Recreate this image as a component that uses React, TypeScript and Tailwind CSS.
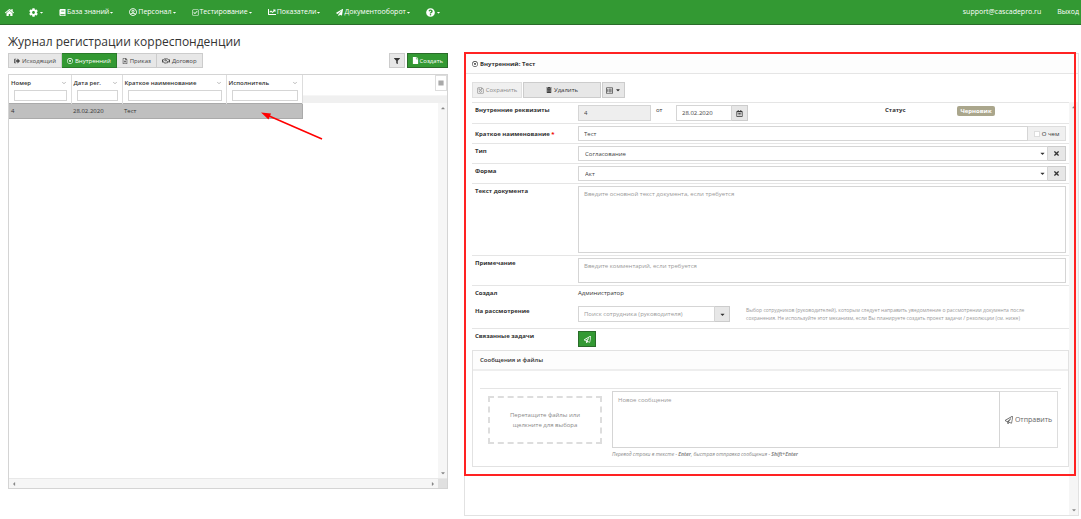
import type { ReactNode } from "react";
import {
  FaBook,
  FaBars,
  FaCaretDown,
  FaCaretLeft,
  FaCaretRight,
  FaCaretUp,
  FaChartLine,
  FaCog,
  FaFile,
  FaFilter,
  FaHome,
  FaPaperPlane,
  FaQuestionCircle,
  FaRegCalendarAlt,
  FaRegCheckSquare,
  FaRegDotCircle,
  FaRegFileAlt,
  FaRegHandshake,
  FaRegListAlt,
  FaRegPaperPlane,
  FaRegSave,
  FaSignOutAlt,
  FaTimes,
  FaTrashAlt,
  FaRegUserCircle,
} from "react-icons/fa";
import { FiChevronDown } from "react-icons/fi";

const menu = [
  { label: "", name: "Настройки", icon: <FaCog className="size-[9px]" /> },
  { label: "База знаний", icon: <FaBook /> },
  { label: "Персонал", icon: <FaRegUserCircle className="size-2" /> },
  { label: "Тестирование", icon: <FaRegCheckSquare /> },
  { label: "Показатели", icon: <FaChartLine className="size-2" /> },
  { label: "Документооборот", icon: <FaPaperPlane /> },
  { label: "", name: "Справка", icon: <FaQuestionCircle className="size-[9px]" /> },
];

const tabs = [
  { label: "Исходящий", icon: <FaSignOutAlt className="size-1.5" /> },
  { label: "Внутренний", icon: <FaRegDotCircle className="size-1.5" />, active: true },
  { label: "Приказ", icon: <FaRegFileAlt className="size-1.5" /> },
  { label: "Договор", icon: <FaRegHandshake className="size-2" /> },
];

const columns = [
  { label: "Номер", width: "w-[62px]" },
  { label: "Дата рег.", width: "w-[51px]" },
  { label: "Краткое наименование", width: "w-[104px]" },
  { label: "Исполнитель", width: "w-[76px]" },
];

const greyButton =
  "flex items-center justify-center gap-0.5 border border-[#ccc] bg-[#e7e7e7] text-[#333]";
const field =
  "block border border-[#d5d5d5] bg-white px-[5px] text-[#444] placeholder:text-[#999] outline-none disabled:bg-[#eee]";

const Header = () => (
  <header className="flex h-[25px] items-center justify-between border-b border-[#2a6b2a] bg-[#339933] pl-[5px] pr-0.5 text-[7px] text-white">
    <nav className="flex items-center gap-[15px]">
      <a href="#home" aria-label="Главная">
        <FaHome className="size-[9px]" />
      </a>
      {menu.map((item) => (
        <a
          key={item.label || item.name}
          href="#menu"
          aria-label={item.label || item.name}
          className="flex items-center font-medium"
        >
          {item.icon}
          <span className="pl-px">{item.label}</span>
          <FaCaretDown className="size-[5px]" />
        </a>
      ))}
    </nav>
    <div className="flex gap-4">
      <a href="#support">support@cascadepro.ru</a>
      <a href="#logout">Выход</a>
    </div>
  </header>
);

const JournalTable = () => (
  <div className="relative mt-1.5 flex flex-1 flex-col border border-[#d4d4d4]">
    <div className="flex flex-1">
      <div className="flex-1">
        <table className="w-full table-fixed border-collapse">
          <thead>
            <tr className="h-7">
              {columns.map((col) => (
                <th
                  key={col.label}
                  className={`${col.width} border-r border-[#ddd] p-0 text-left align-top font-semibold`}
                >
                  <div className="flex h-[15px] items-center justify-between pl-0.5 pr-1 whitespace-nowrap">
                    {col.label}
                    <FiChevronDown className="size-1.5 text-[#777]" />
                  </div>
                  <input
                    aria-label={col.label}
                    className="ml-[5px] block h-[11px] w-[calc(100%-9px)] border border-[#d5d5d5] bg-white px-0.5 font-normal outline-none"
                  />
                </th>
              ))}
              <th className="bg-linear-to-b from-white from-70% to-[#f0f0f0] to-75% p-0" />
            </tr>
          </thead>
          <tbody>
            <tr className="h-[15px] text-[#333]">
              <td className="border-y border-[#aaa] bg-[#bfbfbf] pl-0.5">4</td>
              <td className="border-y border-[#aaa] bg-[#bfbfbf] pl-0.5">28.02.2020</td>
              <td className="border-y border-[#aaa] bg-[#bfbfbf] pl-0.5">Тест</td>
              <td className="border-y border-r border-[#aaa] bg-[#bfbfbf]" />
              <td />
            </tr>
          </tbody>
        </table>
      </div>
      <div className="flex w-[9px] flex-col">
        <div className="h-7 bg-linear-to-b from-white from-70% to-[#f0f0f0] to-75%" />
        <div className="flex flex-1 flex-col items-center justify-between bg-[#f6f6f6] py-0.5 text-[#888]">
          <FaCaretUp className="size-1.5" />
          <FaCaretDown className="size-1.5" />
        </div>
      </div>
    </div>
    <div className="flex h-2.5 border-t border-[#e8e8e8]">
      <div className="flex flex-1 items-center justify-between bg-[#f6f6f6] px-0.5 text-[#888]">
        <FaCaretLeft className="size-1.5" />
        <FaCaretRight className="size-1.5" />
      </div>
      <div className="w-[9px] bg-[#e0e0e0]" />
    </div>
    <button
      aria-label="Меню таблицы"
      className="absolute right-0 top-0 flex h-4 w-3 items-center justify-center border border-[#ddd] bg-white text-[#555]"
    >
      <FaBars className="size-1.5" />
    </button>
  </div>
);

const Journal = () => (
  <section className="relative flex flex-col pb-[27px]">
    <h1 className="mt-2 h-5 text-[12px] leading-[18px] text-[#333]">
      Журнал регистрации корреспонденции
    </h1>
    <div className="flex h-[15px] justify-between">
      <div className="flex">
        {tabs.map((tab) => (
          <button
            key={tab.label}
            className={`flex items-center gap-0.5 border border-l-0 px-[5px] first:border-l ${
              tab.active
                ? "border-[#2a7a2a] bg-[#339933] text-white"
                : "border-[#ccc] bg-[#e7e7e7] text-[#444]"
            }`}
          >
            {tab.icon}
            {tab.label}
          </button>
        ))}
      </div>
      <div className="flex gap-0.5">
        <button aria-label="Фильтр" className={`${greyButton} w-4`}>
          <FaFilter className="size-1.5" />
        </button>
        <button className="flex items-center gap-px border border-[#2a6b2a] bg-[#339933] px-1 font-medium text-white">
          <FaFile className="size-[7px]" />
          Создать
        </button>
      </div>
    </div>
    <JournalTable />
    <svg
      className="pointer-events-none absolute left-[253px] top-[86px] h-[30px] w-[64px]"
      viewBox="0 0 64 30"
    >
      <path d="M61 28 L7 4.500" stroke="#f00" strokeWidth="1.500" />
      <path d="M0 1.500 L10 2.500 L7.500 8.500 Z" fill="#f00" />
    </svg>
  </section>
);

type RowProps = {
  label: string;
  htmlFor?: string;
  required?: boolean;
  noLine?: boolean;
  children: ReactNode;
};

const Row = ({ label, htmlFor, required, noLine, children }: RowProps) => (
  <div className={`flex px-[3px] py-0.5 ${noLine ? "" : "border-b border-[#e5e5e5]"}`}>
    <label htmlFor={htmlFor} className={`w-[103px] shrink-0 font-bold ${required ? "self-center" : ""}`}>
      {label}
      {required && <span className="text-[#e00]"> *</span>}
    </label>
    <div className="flex flex-1">{children}</div>
  </div>
);

const SelectField = ({ id, value }: { id: string; value: string }) => (
  <>
    <div className="relative flex-1">
      <select id={id} className={`${field} h-[15px] w-full appearance-none pl-1.5`}>
        <option>{value}</option>
      </select>
      <span className="pointer-events-none absolute right-0.5 top-1 text-[#333]">
        <FaCaretDown className="size-[7px]" />
      </span>
    </div>
    <button type="button" aria-label="Очистить" className={`${greyButton} h-[15px] w-[18px] border-l-0`}>
      <FaTimes className="size-[7px]" />
    </button>
  </>
);

const Messages = () => (
  <section className="mt-px border border-[#e2e2e2]">
    <h3 className="h-5 border-b-2 border-[#eee] bg-[#fdfdfd] px-[7px] font-semibold leading-[18px]">
      Сообщения и файлы
    </h3>
    <div className="mx-[7px] mt-[17px] flex border-t border-[#e5e5e5] pb-2 pt-0.5">
      <button
        type="button"
        className="ml-2 mr-2.5 mt-[5px] h-12 w-[114px] border-2 border-dashed border-[#ddd] px-4 text-[#888]"
      >
        Перетащите файлы или щелкните для выбора
      </button>
      <div className="flex-1 pr-[3px]">
        <div className="flex h-[57px]">
          <textarea
            aria-label="Новое сообщение"
            placeholder="Новое сообщение"
            className={`${field} flex-1 resize-none py-[3px]`}
          />
          <button
            type="button"
            className="flex w-[58px] items-center justify-center gap-0.5 border border-l-0 border-[#ddd] text-[7px] text-[#666]"
          >
            <FaRegPaperPlane className="size-2" />
            Отправить
          </button>
        </div>
        <p className="pt-0.5 text-[5px] italic leading-2 text-[#888]">
          Перевод строки в тексте - <b>Enter</b>, быстрая отправка сообщения -{" "}
          <b>Shift+Enter</b>
        </p>
      </div>
    </div>
  </section>
);

const DocumentCard = () => (
  <section className="relative mt-7 flex flex-col border border-[#e2e2e2]">
    <h2 className="flex h-5 items-center gap-0.5 border-b border-[#e5e5e5] bg-[#fdfdfd] px-[7px] font-bold">
      <FaRegDotCircle className="size-1.5" />
      Внутренний: Тест
    </h2>
    <div className="flex h-6 gap-px px-[7px] pt-2">
      <button disabled className={`${greyButton} w-[50px] opacity-60`}>
        <FaRegSave className="size-[7px]" />
        Сохранить
      </button>
      <button className={`${greyButton} w-[78px]`}>
        <FaTrashAlt className="size-1.5" />
        Удалить
      </button>
      <button aria-label="Вид" className={`${greyButton} w-[23px]`}>
        <FaRegListAlt className="size-[7px]" />
        <FaCaretDown className="size-1.5" />
      </button>
    </div>
    <div className="mt-1 flex flex-1 pl-[7px]">
      <form className="flex-1 border-t border-[#e5e5e5]">
        <Row label="Внутренние реквизиты" htmlFor="number">
          <input id="number" disabled defaultValue="4" className={`${field} h-4 w-[73px]`} />
          <label htmlFor="date" className="w-[25px] pl-[5px]">
            от
          </label>
          <input id="date" defaultValue="28.02.2020" className={`${field} h-4 w-14`} />
          <button type="button" aria-label="Календарь" className={`${greyButton} h-4 w-4 border-l-0`}>
            <FaRegCalendarAlt className="size-[7px]" />
          </button>
          <div className="flex flex-1 justify-end pr-[71px]">
            <span className="w-[72px] font-bold">Статус</span>
            <span className="mt-px h-2.5 w-[38px] rounded-xs bg-[#aaa68c] text-center font-bold leading-2.5 text-white">
              Черновик
            </span>
          </div>
        </Row>
        <Row label="Краткое наименование" htmlFor="name" required>
          <input id="name" defaultValue="Тест" className={`${field} h-[15px] flex-1`} />
          <label className="flex h-[15px] w-[38px] items-center justify-center gap-0.5 border border-l-0 border-[#ddd] bg-[#f0f0f0]">
            <input type="checkbox" className="size-1.5 appearance-none border border-[#ddd] bg-white" />
            О чем
          </label>
        </Row>
        <Row label="Тип" htmlFor="type">
          <SelectField id="type" value="Согласование" />
        </Row>
        <Row label="Форма" htmlFor="form">
          <SelectField id="form" value="Акт" />
        </Row>
        <Row label="Текст документа" htmlFor="text">
          <textarea
            id="text"
            placeholder="Введите основной текст документа, если требуется"
            className={`${field} h-[67px] flex-1 resize-none py-0.5`}
          />
        </Row>
        <Row label="Примечание" htmlFor="note">
          <textarea
            id="note"
            placeholder="Введите комментарий, если требуется"
            className={`${field} h-[25px] flex-1 resize-none py-0.5`}
          />
        </Row>
        <Row label="Создал" noLine>
          Администратор
        </Row>
        <div className="border-b border-[#e5e5e5] py-1">
          <Row label="На рассмотрение" htmlFor="review" noLine>
            <input
              id="review"
              placeholder="Поиск сотрудника (руководителя)"
              className={`${field} h-4 w-[137px] shrink-0`}
            />
            <button type="button" aria-label="Выбрать" className={`${greyButton} h-4 w-[15px] shrink-0 border-l-0`}>
              <FaCaretDown className="size-[7px]" />
            </button>
            <p className="ml-4 w-[292px] text-[5px] leading-2 text-[#999]">
              Выбор сотрудников (руководителей), которым следует направить уведомление о рассмотрении документа после
              сохранения. Не используйте этот механизм, если Вы планируете создать проект задачи / резолюции (см. ниже)
            </p>
          </Row>
        </div>
        <Row label="Связанные задачи" noLine>
          <button
            type="button"
            aria-label="Создать задачу"
            className="flex h-4 w-[18px] items-center justify-center border border-[#2a6b2a] bg-[#339933] text-white"
          >
            <FaRegPaperPlane className="size-[7px]" />
          </button>
        </Row>
        <Messages />
      </form>
      <div className="flex w-[9px] flex-col items-center justify-between bg-[#f6f6f6] py-0.5 text-[#888]">
        <FaCaretUp className="size-1.5" />
        <FaCaretDown className="size-1.5" />
      </div>
    </div>
    {/* highlight around the open card */}
    <div className="pointer-events-none absolute -left-px right-0.5 -top-0.5 bottom-[39px] border-2 border-[#f22]" />
  </section>
);

export default function App() {
  return (
    <div className="flex min-h-screen flex-col bg-white font-['Open_Sans','Noto_Sans',sans-serif] text-[6px] leading-[10px] text-[#333]">
      <Header />
      <main className="grid flex-1 grid-cols-[440fr_615fr] gap-4 pb-[3px] pl-2 pr-0.5">
        <Journal />
        <DocumentCard />
      </main>
    </div>
  );
}
